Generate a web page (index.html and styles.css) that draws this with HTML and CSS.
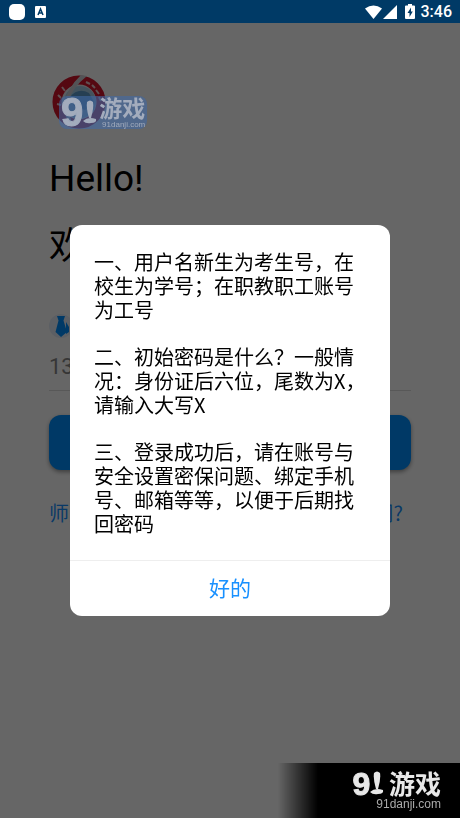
FILE: index.html
```html
<!DOCTYPE html>
<html lang="zh-CN">
<head>
    <meta charset="UTF-8">
    <meta name="viewport" content="width=device-width, initial-scale=1.0">
    <title>登录</title>
    <link rel="stylesheet" href="styles.css">
</head>
<body>
    <header class="status-bar">
        <span class="status-app"></span>
        <svg class="status-keyboard" viewBox="0 0 11 12" width="11" height="12">
            <rect width="11" height="12" rx="1" fill="#fff"/>
            <path d="M3 9 L5.5 3 L8 9 M4 7 H7" fill="none" stroke="#003a66" stroke-width="1.5"/>
        </svg>
        <div class="status-right">
            <svg viewBox="0 0 34 14" width="34" height="14" fill="#fff">
                <path d="M0 3.5 Q8.5 -2.5 17 3.5 L8.5 14 Z"/>
                <path d="M32 0 V14 H18 Z"/>
            </svg>
            <svg viewBox="0 0 10 15" width="10" height="15">
                <path d="M3 0 H7 V1.5 H9 Q10 1.5 10 2.5 V14 Q10 15 9 15 H1 Q0 15 0 14 V2.5 Q0 1.5 1 1.5 H3 Z" fill="#fff"/>
                <path d="M6 3.5 L2.5 9 H4.5 V13 L7.8 7.5 H6 Z" fill="#003a66"/>
            </svg>
            <span>3:46</span>
        </div>
    </header>

    <main class="login">
        <div class="logo">
            <svg viewBox="0 0 54 54" width="54" height="54">
                <circle cx="27" cy="27" r="26.5" fill="#e8e8ee"/>
                <circle cx="27" cy="27" r="22" fill="none" stroke="#d4142c" stroke-width="9"/>
                <circle cx="28" cy="27" r="16" fill="#a8cfe8"/>
                <path d="M18 22 Q26 12 37 18 L42 27 L33 35 L22 31 Z" fill="#5f9fd0"/>
                <path d="M29 0 Q14 14 12 31 Q12 42 19 50 L22 51 Q15 39 17 25 Q21 12 35 1 Z" fill="#d0d0d6"/>
                <path d="M34 7 L38 9 M40 10 L43 13 M44 15 L47 19 M47 22 L49 26 M10 12 L13 16 M6 20 L9 23 M5 29 L9 30" stroke="#f0c8cc" stroke-width="2"/>
            </svg>
            <div class="brand brand-small">
                <span class="brand-nine">9</span>
                <svg class="brand-stick" viewBox="0 0 14 24" width="14" height="30">
                    <path d="M4 2 Q7 -1 10 2 Q11 8 8 18 H6 Q3 8 4 2 Z"/>
                    <path d="M0 21 Q5 16 13 19 Q14 23 8 23 Q3 24 0 21 Z"/>
                </svg>
                <div class="brand-name">
                    <strong>游戏</strong>
                    <span>91danji.com</span>
                </div>
            </div>
        </div>

        <h1 class="hello">Hello!</h1>
        <h2 class="welcome">欢迎</h2>

        <form class="login-form">
            <label class="account-label" for="account" aria-label="账号">
                <svg viewBox="0 0 24 24" width="24" height="24">
                    <circle cx="12" cy="12" r="12" fill="#e6eefa"/>
                    <path d="M8 2 H16 L14.5 6.5 L18 18 L12 23 L6.5 18 L9.5 6.5 Z" fill="#0090ff"/>
                    <path d="M17 8 L20 13 V18 L17 20 Z" fill="#0090ff"/>
                </svg>
            </label>
            <input class="account" id="account" type="text" value="13">
            <button class="submit" type="button" aria-label="登录"></button>
        </form>
        <nav class="links">
            <a href="#">师生</a>
            <a href="#">疑问?</a>
        </nav>
    </main>

    <div class="overlay">
        <section class="dialog" role="dialog" aria-modal="true">
            <div class="dialog-body">
                <p>一、用户名新生为考生号，在校生为学号；在职教职工账号为工号</p>
                <p>二、初始密码是什么？一般情况：身份证后六位，尾数为X，请输入大写X</p>
                <p>三、登录成功后，请在账号与安全设置密保问题、绑定手机号、邮箱等等，以便于后期找回密码</p>
            </div>
            <button class="dialog-ok" type="button">好的</button>
        </section>
    </div>

    <footer class="watermark">
        <div class="brand">
            <span class="brand-nine">9</span>
            <svg class="brand-stick" viewBox="0 0 14 24" width="14" height="24">
                <path d="M4 2 Q7 -1 10 2 Q11 8 8 18 H6 Q3 8 4 2 Z"/>
                <path d="M0 21 Q5 16 13 19 Q14 23 8 23 Q3 24 0 21 Z"/>
            </svg>
            <div class="brand-name">
                <strong>游戏</strong>
                <span>91danji.com</span>
            </div>
        </div>
    </footer>
</body>
</html>
```
FILE: styles.css
```css
* {
    box-sizing: border-box;
}
body {
    margin: 0;
    min-height: 100vh;
    background: #fff;
    color: #000;
    font-family: Roboto, "Noto Sans CJK SC", sans-serif;
}

/* status bar */
.status-bar {
    display: flex;
    align-items: center;
    height: 23px;
    padding: 0 8px 0 9px;
    background: #003a66;
    color: #fff;
}
.status-app {
    width: 16px;
    height: 16px;
    border-radius: 5px;
    background: #fff;
}
.status-keyboard {
    margin-left: 10px;
}
.status-right {
    display: flex;
    align-items: center;
    gap: 6px;
    margin-left: auto;
    font-size: 16px;
    font-weight: 500;
    line-height: 23px;
}

/* login page */
.login {
    padding: 52px 49px 0;
}
.logo {
    position: relative;
    height: 54px;
    padding-left: 3px;
}
.hello,
.welcome {
    margin: 0;
    font-size: 37px;
    font-weight: 400;
    line-height: 44px;
}
.hello {
    margin-top: 28px;
}
.welcome {
    margin-top: 24px;
}
.login-form {
    margin-top: 45px;
}
.account-label {
    display: flex;
    align-items: center;
    height: 24px;
}
.account {
    display: block;
    width: 100%;
    height: 53px;
    padding: 4px 0 0;
    border: 0;
    border-bottom: 1px solid #ddd;
    background: none;
    color: #888;
    font-family: inherit;
    font-size: 22px;
}
.submit {
    display: block;
    width: 100%;
    height: 55px;
    margin-top: 24px;
    border: 0;
    border-radius: 12px;
    background: #0090ff;
    box-shadow: 0 2px 4px rgba(0, 0, 0, 0.4);
}
.links {
    display: flex;
    justify-content: space-between;
    padding: 28px 8px 0 0;
    font-family: "Noto Sans CJK SC", sans-serif;
    font-size: 20px;
    line-height: 30px;
}
.links a {
    color: #1890ff;
    text-decoration: none;
}

/* dialog */
.overlay {
    position: fixed;
    top: 23px;
    right: 0;
    bottom: 0;
    left: 0;
    display: flex;
    align-items: center;
    justify-content: center;
    padding: 0 70px;
    background: rgba(0, 0, 0, 0.6);
}
.dialog {
    width: 100%;
    max-width: 400px;
    overflow: hidden;
    border-radius: 12px;
    background: #fff;
}
.dialog-body {
    padding: 25px 20px 24px 24px;
    font-family: "Noto Sans CJK SC", sans-serif;
    font-size: 20px;
    line-height: 24px;
}
.dialog-body p {
    margin: 0 0 23px;
}
.dialog-body p:last-child {
    margin-bottom: 0;
}
.dialog-ok {
    display: block;
    width: 100%;
    height: 56px;
    padding: 0 0 4px;
    border: 0;
    border-top: 1px solid #eee;
    background: none;
    color: #1890ff;
    font-family: inherit;
    font-size: 21px;
}

/* site mark */
.watermark {
    position: fixed;
    right: 0;
    bottom: 0;
    display: flex;
    justify-content: flex-end;
    width: 182px;
    height: 55px;
    padding: 7px 19px 0 0;
    background: linear-gradient(to right, transparent, #000 40px);
}
.brand {
    display: flex;
    align-items: flex-start;
    color: #e8e8e8;
    fill: currentColor;
}
.brand-nine {
    font-family: "Liberation Sans", sans-serif;
    font-size: 32px;
    font-weight: 700;
    line-height: 28px;
    -webkit-text-stroke: 1px currentColor;
}
.brand-stick {
    margin-top: 1px;
}
.brand-name {
    display: flex;
    flex-direction: column;
    align-items: flex-end;
    margin-left: 4px;
}
.brand-name strong {
    font-family: "Noto Sans CJK SC", sans-serif;
    font-size: 26px;
    font-weight: 700;
    line-height: 26px;
}
.brand-name span {
    margin-left: -12px;
    padding-top: 2px;
    color: #aaa;
    font-family: "Liberation Sans", sans-serif;
    font-size: 12px;
    line-height: 12px;
}
.brand-small {
    position: absolute;
    z-index: 1;
    top: 21px;
    left: 10px;
    padding: 0 2px;
    border-radius: 8px;
    background: rgba(65, 105, 165, 0.6);
    color: #a3acbd;
}
.brand-small .brand-nine {
    font-size: 40px;
    line-height: 32px;
}
.brand-small .brand-name {
    margin-left: 2px;
}
.brand-small .brand-name strong {
    font-size: 23px;
    line-height: 22px;
}
.brand-small .brand-name span {
    margin-left: 0;
    color: inherit;
    font-size: 8px;
    line-height: 9px;
}
```
